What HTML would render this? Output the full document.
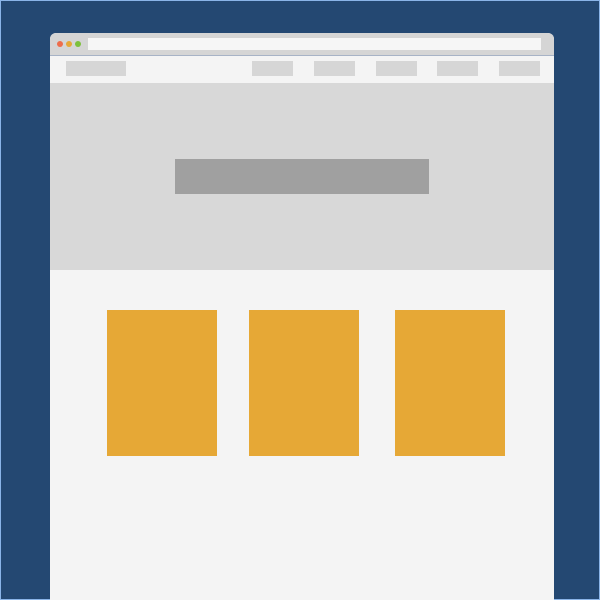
<!DOCTYPE html>
<html><head><style>
*{margin:0;padding:0;box-sizing:border-box}
html,body{width:600px;height:600px;overflow:hidden}
body{background:#244872;position:relative}
div{position:absolute}
</style></head><body>
<div style="left:0;top:0;width:600px;height:600px;border:1px solid #8ab4e8"></div>
<div style="left:50px;top:33px;width:504px;height:567px;background:#f4f4f4;border-radius:6px 6px 0 0;overflow:hidden">
  <div style="left:0;top:0;width:504px;height:22px;background:#d5d5d5"></div>
  <div style="left:0;top:22px;width:504px;height:1px;background:#a7b3c6"></div>
  <div style="left:7px;top:8px;width:6px;height:6px;border-radius:50%;background:#ee6d4b"></div>
  <div style="left:16px;top:8px;width:6px;height:6px;border-radius:50%;background:#e6a836"></div>
  <div style="left:25px;top:8px;width:6px;height:6px;border-radius:50%;background:#7dc13b"></div>
  <div style="left:38px;top:5px;width:453px;height:12px;background:#f6f6f6"></div>
  <div style="left:16px;top:28px;width:60px;height:15px;background:#d6d6d6"></div>
  <div style="left:202px;top:28px;width:41px;height:15px;background:#d6d6d6"></div>
  <div style="left:264px;top:28px;width:41px;height:15px;background:#d6d6d6"></div>
  <div style="left:326px;top:28px;width:41px;height:15px;background:#d6d6d6"></div>
  <div style="left:387px;top:28px;width:41px;height:15px;background:#d6d6d6"></div>
  <div style="left:449px;top:28px;width:41px;height:15px;background:#d6d6d6"></div>
  <div style="left:0;top:50px;width:504px;height:187px;background:#d8d8d8"></div>
  <div style="left:125px;top:126px;width:254px;height:35px;background:#a0a0a0"></div>
  <div style="left:57px;top:277px;width:110px;height:146px;background:#e6a836"></div>
  <div style="left:199px;top:277px;width:110px;height:146px;background:#e6a836"></div>
  <div style="left:345px;top:277px;width:110px;height:146px;background:#e6a836"></div>
</div>
</body></html>
